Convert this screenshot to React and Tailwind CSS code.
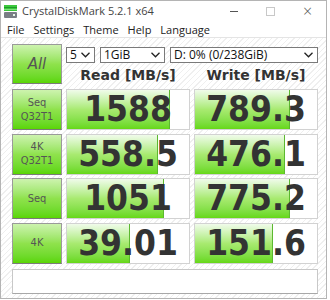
import React from "react";

// ─── DATA ──────────────────────────────────────────────────────────────────
const rows = [
  { l1: "Seq", l2: "Q32T1", read: "1588", rf: 103, write: "789.3", wf: 95 },
  { l1: "4K", l2: "Q32T1", read: "558.5", rf: 91, write: "476.1", wf: 90 },
  { l1: "Seq", l2: null, read: "1051", rf: 97, write: "775.2", wf: 95 },
  { l1: "4K", l2: null, read: "39.01", rf: 63, write: "151.6", wf: 78 },
];

const AppIcon = () => (
  <svg width="13" height="13" viewBox="0 0 13 13">
    <rect x="0" y="0" width="13" height="6" fill="#3cc83c" />
    <rect x="0" y="2" width="13" height="1" fill="#1e9a2a" />
    <rect x="0" y="4" width="13" height="1" fill="#7ee07e" />
    <rect x="0" y="7" width="13" height="6" rx="1" fill="#7a7f86" />
    <rect x="9" y="9" width="2" height="2" fill="#e8f5e8" />
  </svg>
);

const Chevron = () => (
  <svg width="9" height="6" viewBox="0 0 9 6" fill="none" stroke="#222" strokeWidth="1.3">
    <path d="M0.5 0.8 L4.5 4.8 L8.5 0.8" />
  </svg>
);

function Select({ w, text }) {
  return (
    <div className={`${w} h-[16px] bg-white border border-[#7a7a7a] flex items-center justify-between pl-[3px] pr-[4px] text-[12px] leading-none text-[#111]`}>
      <span>{text}</span>
      <Chevron />
    </div>
  );
}

function Label({ l1, l2 }) {
  return (
    <div className="w-[50px] h-[41px] border border-[#9a9a9a] border-b-[#7a7a7a] bg-gradient-to-b from-[#cdf3ae] via-[#8fe24c] to-[#5ad600] flex flex-col items-center justify-center text-[11px] leading-[14px] text-[#555] font-['DejaVu_Sans_Condensed',sans-serif]">
      <span>{l1}</span>
      {l2 && <span>{l2}</span>}
    </div>
  );
}

function Value({ text, fill }) {
  return (
    <div className="relative w-[124px] h-[41px] bg-white border border-[#d2d2d2] flex items-center justify-center overflow-hidden">
      <div className="absolute left-0 top-0 bottom-0 bg-gradient-to-b from-[#f0fbea] via-[#a8ea70] to-[#66d814] border-r border-[#5cb830]" style={{ width: fill }} />
      <span className="relative font-['DejaVu_Sans_Condensed',sans-serif] font-bold text-[35px] leading-none text-[#333]">{text}</span>
    </div>
  );
}

export default function App() {
  return (
    <div className="w-[327px] h-[299px] border border-[#b4b4b4] bg-white flex flex-col overflow-hidden font-['Open_Sans','Noto_Sans',sans-serif]">
      {/* title bar */}
      <div className="h-[20px] flex items-center pl-[3px] shrink-0">
        <AppIcon />
        <span className="ml-[5px] text-[11px] text-[#444]">CrystalDiskMark 5.2.1 x64</span>
        <div className="ml-auto flex items-center h-full">
          <div className="w-[37px] flex justify-center"><div className="w-[8px] h-px bg-[#555]" /></div>
          <div className="w-[37px] flex justify-center"><div className="w-[9px] h-[9px] border border-[#c8c8c8]" /></div>
          <div className="w-[37px] flex justify-center text-[16px] leading-none text-[#555] font-light">×</div>
        </div>
      </div>
      {/* menu bar */}
      <div className="h-[16px] flex items-center gap-[9px] pl-[6px] text-[11px] leading-none text-[#222] shrink-0">
        <span>File</span>
        <span>Settings</span>
        <span>Theme</span>
        <span>Help</span>
        <span>Language</span>
      </div>
      {/* client */}
      <div className="flex-1 border-t border-[#e4e4e4] bg-[repeating-linear-gradient(135deg,#ffffff_0px,#ffffff_3px,#efefef_3px,#efefef_4px)] pl-[11px] pt-[6px] flex flex-col">
        <div className="flex gap-[4px] h-[40px]">
          <div className="w-[50px] h-[40px] border border-[#9a9a9a] border-b-[#7a7a7a] bg-gradient-to-b from-[#cdf3ae] via-[#8fe24c] to-[#5ad600] flex items-center justify-center text-[15px] italic text-[#555] font-['DejaVu_Sans',sans-serif]">
            All
          </div>
          <div className="flex flex-col">
            <div className="flex gap-[5px] mt-[3px]">
              <Select w="w-[29px]" text="5" />
              <Select w="w-[65px]" text="1GiB" />
              <Select w="w-[148px]" text="D: 0% (0/238GiB)" />
            </div>
            <div className="flex gap-[4px] mt-[3px] h-[18px] font-['DejaVu_Sans',sans-serif] font-bold text-[14px] leading-[18px] text-[#333]">
              <div className="w-[124px] text-center">Read [MB/s]</div>
              <div className="w-[124px] text-center">Write [MB/s]</div>
            </div>
          </div>
        </div>
        <div className="flex flex-col gap-[3.5px] mt-[5px]">
          {rows.map((r, i) => (
            <div key={i} className="flex gap-[4px]">
              <Label l1={r.l1} l2={r.l2} />
              <Value text={r.read} fill={r.rf} />
              <Value text={r.write} fill={r.wf} />
            </div>
          ))}
        </div>
        <div className="mt-[5px] w-[306px] h-[25px] shrink-0 bg-white border border-[#c8c8c8] border-b-[#a8a8a8]" />
      </div>
    </div>
  );
}
